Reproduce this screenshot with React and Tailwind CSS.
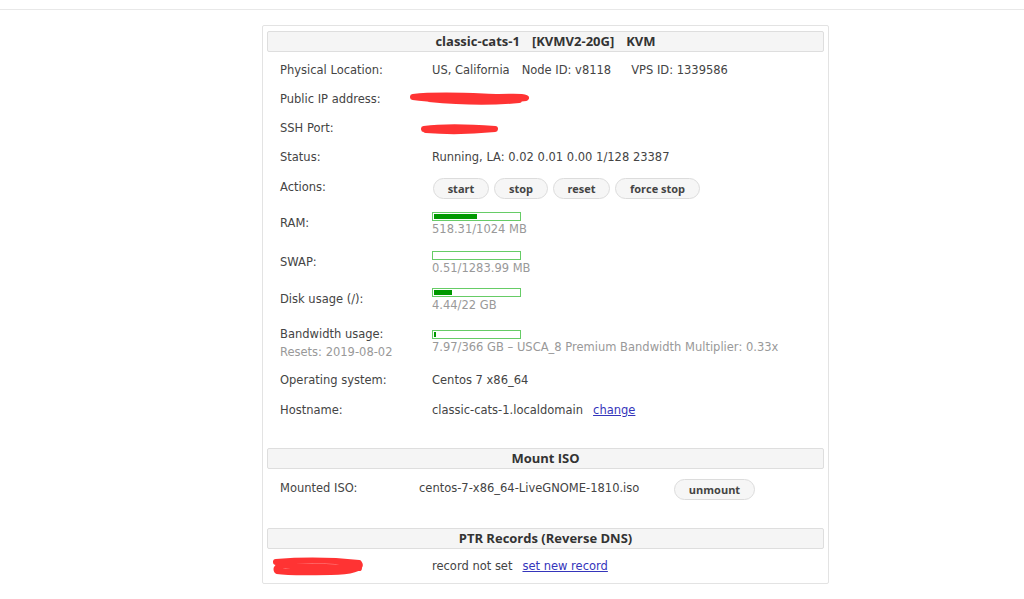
import React from 'react';

const Scribble = ({ w, h, d }) => (
  <svg width={w} height={h} viewBox={`0 0 ${w} ${h}`} className="block">
    <path d={d} fill="none" stroke="#ff3333" strokeLinecap="round" strokeLinejoin="round" strokeWidth="6" />
  </svg>
);

const Bar = ({ pct, text }) => (
  <div className="flex flex-col">
    <div className="w-[89px] h-[9px] border border-[#66cc66] bg-white p-[1px]">
      <div className="h-full bg-[#009900]" style={{ width: `${pct}%` }} />
    </div>
    <div className="text-[#999] leading-[15px] mt-[1px]">{text}</div>
  </div>
);

const Btn = ({ children, className = '' }) => (
  <button className={`h-[21px] rounded-full border border-[#dcdcdc] bg-[#f6f6f6] font-['Open_Sans',sans-serif] font-bold text-[#444] text-[11px] leading-none ${className}`}>
    {children}
  </button>
);

const Header = ({ children }) => (
  <div className="h-[21px] rounded-[2px] border border-[#dedede] bg-[#f5f5f5] flex items-center justify-center font-['Open_Sans',sans-serif] font-bold text-[13px] text-[#333]">
    {children}
  </div>
);

const Row = ({ h, label, children, lw = 'w-[152px]' }) => (
  <div className={`flex items-center pl-[13px] ${h}`}>
    <div className={`${lw} shrink-0`}>{label}</div>
    <div className="flex-1">{children}</div>
  </div>
);

export default function App() {
  return (
    <div className="w-[1024px] h-[599px] bg-white text-[11.5px] text-[#444] font-['DejaVu_Sans',sans-serif] overflow-hidden">
      <div className="h-[10px] border-b border-[#e8e8e8]" />
      <div className="ml-[262px] mt-[15px] w-[567px] h-[559px] border border-[#e3e3e3] rounded-[2px] px-[4px] pt-[5px]">
        <Header>
          <span>classic-cats-1</span>
          <span className="ml-[12px]">[KVMV2-20G]</span>
          <span className="ml-[12px]">KVM</span>
        </Header>
        <div className="pt-[4px]">
          <Row h="h-[29px]" label="Physical Location:">
            <span>US, California</span>
            <span className="ml-[12px]">Node ID: v8118</span>
            <span className="ml-[20px]">VPS ID: 1339586</span>
          </Row>
          <Row h="h-[29px]" label="Public IP address:">
            <div className="-ml-[23px]">
              <Scribble w={122} h={16} d="M4 5 C 30 2, 60 4, 90 5 C 104 5, 112 4, 117 6 C 100 8, 70 11, 40 8 C 25 7, 12 6, 4 5 M 20 7 C 50 10, 80 11, 110 8" />
            </div>
          </Row>
          <Row h="h-[29px]" label="SSH Port:">
            <div className="-ml-[12px]">
              <Scribble w={80} h={12} d="M4 6 C 25 3, 50 4, 75 6 C 55 8, 30 9, 6 7" />
            </div>
          </Row>
          <Row h="h-[29px]" label="Status:">
            Running, LA: 0.02 0.01 0.00 1/128 23387
          </Row>
          <Row h="h-[32px]" label="Actions:">
            <div className="flex gap-[5px] pl-[1px]">
              <Btn className="w-[56px]">start</Btn>
              <Btn className="w-[54px]">stop</Btn>
              <Btn className="w-[57px]">reset</Btn>
              <Btn className="w-[85px]">force stop</Btn>
            </div>
          </Row>
          <Row h="h-[40px]" label="RAM:">
            <Bar pct={51} text="518.31/1024 MB" />
          </Row>
          <Row h="h-[38px]" label="SWAP:">
            <Bar pct={0} text="0.51/1283.99 MB" />
          </Row>
          <Row h="h-[36px]" label="Disk usage (/):">
            <Bar pct={21} text="4.44/22 GB" />
          </Row>
          <Row
            h="h-[49px]"
            label={
              <div className="flex flex-col leading-[18px]">
                <span>Bandwidth usage:</span>
                <span className="text-[#999]">Resets: 2019-08-02</span>
              </div>
            }
          >
            <Bar pct={2} text="7.97/366 GB – USCA_8 Premium Bandwidth Multiplier: 0.33x" />
          </Row>
          <Row h="h-[27px]" label="Operating system:">
            Centos 7 x86_64
          </Row>
          <Row h="h-[33px]" label="Hostname:">
            <span>classic-cats-1.localdomain</span>
            <a href="#" className="ml-[10px] text-[#3535bb] underline">change</a>
          </Row>
        </div>
        <div className="mt-[21px]">
          <Header>Mount ISO</Header>
        </div>
        <Row h="h-[40px]" label="Mounted ISO:" lw="w-[139px]">
          <div className="flex items-center">
            <span className="w-[255px] whitespace-nowrap">centos-7-x86_64-LiveGNOME-1810.iso</span>
            <Btn className="w-[81px]">unmount</Btn>
          </div>
        </Row>
        <div className="mt-[19px]">
          <Header>PTR Records (Reverse DNS)</Header>
        </div>
        <Row
          h="h-[36px]"
          label={
            <div className="-ml-[9px]">
              <Scribble w={96} h={22} d="M5 6 C 30 4, 60 4, 88 7 C 92 12, 80 16, 60 16 C 40 16, 20 17, 6 15 C 4 11, 8 9, 20 10 C 40 11, 70 11, 88 12" />
            </div>
          }
        >
          <span>record not set</span>
          <a href="#" className="ml-[10px] text-[#3535bb] underline">set new record</a>
        </Row>
      </div>
    </div>
  );
}
